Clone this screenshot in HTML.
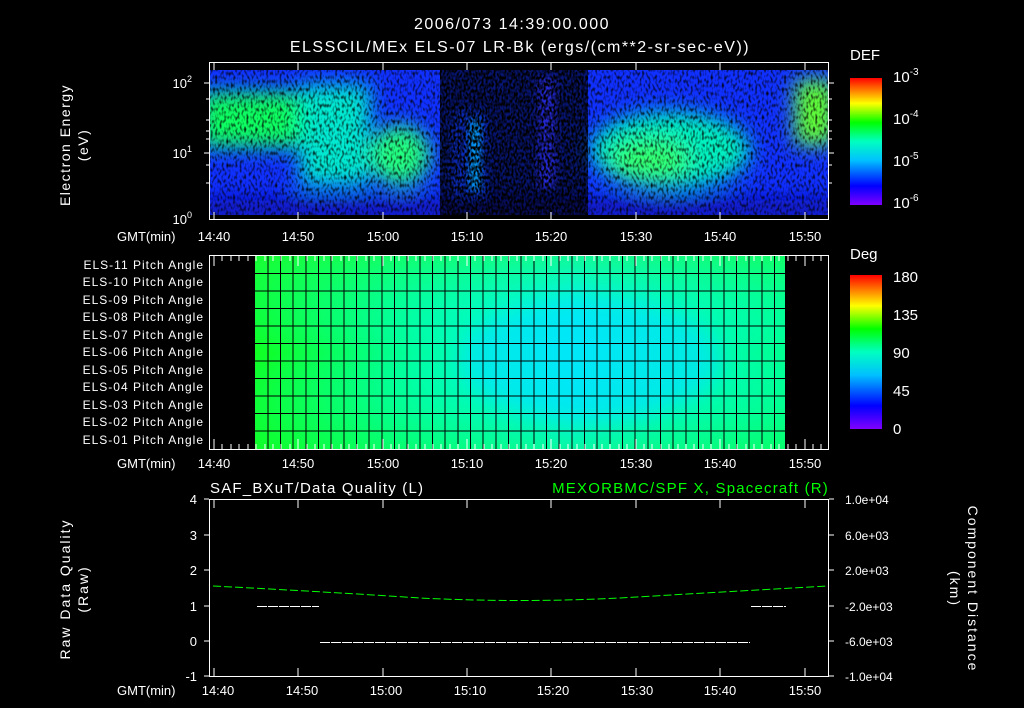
<!DOCTYPE html>
<html><head><meta charset="utf-8"><style>
html,body{margin:0;padding:0;background:#000;}
svg{display:block}
text{font-family:"Liberation Sans",sans-serif;fill:#fff;}
</style></head><body>
<svg width="1024" height="708" viewBox="0 0 1024 708" xmlns="http://www.w3.org/2000/svg">
<defs>
<filter id="b8" x="-50%" y="-50%" width="200%" height="200%"><feGaussianBlur stdDeviation="10"/></filter>
<filter id="b4" x="-50%" y="-50%" width="200%" height="200%"><feGaussianBlur stdDeviation="4"/></filter>
<filter id="noise" x="0" y="0" width="100%" height="100%">
<feTurbulence type="fractalNoise" baseFrequency="0.45 0.25" numOctaves="1" seed="3" result="t"/>
<feColorMatrix in="t" type="matrix" values="0 0 0 0 0  0 0 0 0 0  0 0 0 0 0  0 0 0 -2.5 1.35"/>
</filter>
<filter id="noise2" x="0" y="0" width="100%" height="100%">
<feTurbulence type="fractalNoise" baseFrequency="0.5 0.3" numOctaves="1" seed="7" result="t"/>
<feColorMatrix in="t" type="matrix" values="0 0 0 0 0  0 0 0 0 0  0 0 0 0 0  0 0 0 -4 2.4"/>
</filter>
<clipPath id="c1"><rect x="210" y="70" width="618" height="145"/></clipPath>
<linearGradient id="cb1" x1="0" y1="1" x2="0" y2="0">
<stop offset="0" stop-color="#8000ff"/><stop offset="0.15" stop-color="#0000ff"/><stop offset="0.35" stop-color="#00c0ff"/><stop offset="0.5" stop-color="#00ffc0"/><stop offset="0.65" stop-color="#00ff00"/><stop offset="0.8" stop-color="#ffff00"/><stop offset="0.9" stop-color="#ff8000"/><stop offset="1" stop-color="#ff0000"/>
</linearGradient>
<linearGradient id="mg" x1="0" y1="0" x2="1" y2="0">
<stop offset="0" stop-color="#10ff20"/><stop offset="0.3" stop-color="#00ffa0"/><stop offset="0.6" stop-color="#00f4f0"/><stop offset="1" stop-color="#00ff90"/>
</linearGradient>
<linearGradient id="mgv" x1="0" y1="0" x2="0" y2="1">
<stop offset="0" stop-color="#20ff40" stop-opacity="0.5"/><stop offset="0.5" stop-color="#00ffff" stop-opacity="0"/><stop offset="1" stop-color="#10ff30" stop-opacity="0.4"/>
</linearGradient>
</defs>

<g letter-spacing="1.5">
<text x="512" y="29" font-size="16" text-anchor="middle">2006/073 14:39:00.000</text>
<text x="520" y="52" font-size="16" text-anchor="middle">ELSSCIL/MEx ELS-07 LR-Bk  (ergs/(cm**2-sr-sec-eV))</text>
</g>

<g clip-path="url(#c1)">
<rect x="210" y="70" width="618" height="145" fill="#1030ff"/>
<g filter="url(#b8)">
<rect x="200" y="92" width="100" height="55" fill="#10ff60"/>
<rect x="300" y="85" width="70" height="100" fill="#00e8d0"/>
<ellipse cx="400" cy="155" rx="30" ry="30" fill="#20ff80"/>
<ellipse cx="670" cy="150" rx="80" ry="38" fill="#00f0c0"/>
<ellipse cx="650" cy="160" rx="40" ry="20" fill="#30ff70"/>
<rect x="795" y="80" width="40" height="65" fill="#60ff30"/>
<rect x="200" y="200" width="640" height="20" fill="#1010b0"/>
</g>
<rect x="440" y="70" width="148" height="145" fill="#000" opacity="0.55"/>
<rect x="452" y="110" width="35" height="90" fill="#1040ff" opacity="0.5" filter="url(#b4)"/>
<rect x="470" y="120" width="10" height="70" fill="#00b0ff" filter="url(#b4)"/>
<rect x="538" y="78" width="18" height="110" fill="#3030ff" opacity="0.7" filter="url(#b4)"/>
<rect x="210" y="70" width="618" height="145" fill="#000" filter="url(#noise)"/>
<rect x="440" y="70" width="148" height="145" fill="#000" filter="url(#noise2)"/>
</g>
<rect x="209.5" y="62.5" width="619" height="157" fill="none" stroke="#fff"/>
<g stroke="#fff">
<path d="M214 62v8M298 62v8M383 62v8M467 62v8M551 62v8M636 62v8M720 62v8M805 62v8M214 220v-8M298 220v-8M383 220v-8M467 220v-8M551 220v-8M636 220v-8M720 220v-8M805 220v-8"/>
<path d="M209 83h-5M209 153h-5M829 83h5M829 153h5M209 99h-3M209 120h-3M209 131h-3M209 139h-3M209 165h-3M209 183h-3M829 99h3M829 120h3M829 131h3M829 139h3M829 165h3M829 183h3"/>
</g>
<text x="192" y="88" font-size="13" text-anchor="end">10<tspan font-size="9" dy="-6">2</tspan></text>
<text x="192" y="158" font-size="13" text-anchor="end">10<tspan font-size="9" dy="-6">1</tspan></text>
<text x="192" y="224" font-size="13" text-anchor="end">10<tspan font-size="9" dy="-6">0</tspan></text>
<g letter-spacing="1.5">
<text transform="translate(70,145) rotate(-90)" font-size="14" text-anchor="middle">Electron Energy</text>
<text transform="translate(88,145) rotate(-90)" font-size="14" text-anchor="middle">(eV)</text>
</g>
<g font-size="13">
<text x="117" y="241">GMT(min)</text>
<text x="214" y="241" text-anchor="middle">14:40</text><text x="298" y="241" text-anchor="middle">14:50</text><text x="383" y="241" text-anchor="middle">15:00</text><text x="467" y="241" text-anchor="middle">15:10</text><text x="551" y="241" text-anchor="middle">15:20</text><text x="636" y="241" text-anchor="middle">15:30</text><text x="720" y="241" text-anchor="middle">15:40</text><text x="805" y="241" text-anchor="middle">15:50</text>
</g>
<text x="850" y="60" font-size="15">DEF</text>
<rect x="850" y="78" width="32" height="127" fill="url(#cb1)"/>
<text x="893" y="82" font-size="15">10<tspan font-size="10" dy="-7">-3</tspan></text>
<text x="893" y="124" font-size="15">10<tspan font-size="10" dy="-7">-4</tspan></text>
<text x="893" y="166" font-size="15">10<tspan font-size="10" dy="-7">-5</tspan></text>
<text x="893" y="208" font-size="15">10<tspan font-size="10" dy="-7">-6</tspan></text>

<rect x="255" y="256" width="530" height="193" fill="url(#mg)"/>
<rect x="255" y="256" width="530" height="193" fill="url(#mgv)"/>
<ellipse cx="590" cy="360" rx="130" ry="60" fill="#00e0ff" opacity="0.6" filter="url(#b8)"/>
<g stroke="#000" stroke-width="1">
<path d="M255 273.5h530M255 291h530M255 308.5h530M255 326h530M255 343.5h530M255 361h530M255 378.5h530M255 396h530M255 413.5h530M255 431h530"/>
<path d="M268 256v193M280.5 256v193M293 256v193M306 256v193M318.5 256v193M331 256v193M344 256v193M356.5 256v193M369 256v193M382 256v193M394.5 256v193M407 256v193M420 256v193M432.5 256v193M445 256v193M458 256v193M470.5 256v193M483 256v193M496 256v193M508.5 256v193M521 256v193M534 256v193M546.5 256v193M559 256v193M572 256v193M584.5 256v193M597 256v193M610 256v193M622.5 256v193M635 256v193M648 256v193M660.5 256v193M673 256v193M686 256v193M698.5 256v193M711 256v193M724 256v193M736.5 256v193M749 256v193M762 256v193M774.5 256v193"/>
</g>
<rect x="209.5" y="255.5" width="619" height="194" fill="none" stroke="#fff"/>
<g stroke="#fff">
<path d="M214 256v10M298 256v10M383 256v10M467 256v10M551 256v10M636 256v10M720 256v10M805 256v10M214 449v-10M298 449v-10M383 449v-10M467 449v-10M551 449v-10M636 449v-10M720 449v-10M805 449v-10"/>
<path d="M222 256v5M231 256v5M239 256v5M248 256v5M256 256v5M265 256v5M273 256v5M281 256v5M290 256v5M307 256v5M315 256v5M324 256v5M332 256v5M341 256v5M349 256v5M357 256v5M366 256v5M374 256v5M391 256v5M399 256v5M408 256v5M416 256v5M425 256v5M433 256v5M441 256v5M450 256v5M458 256v5M475 256v5M484 256v5M492 256v5M501 256v5M509 256v5M517 256v5M526 256v5M534 256v5M543 256v5M560 256v5M568 256v5M577 256v5M585 256v5M594 256v5M602 256v5M610 256v5M619 256v5M627 256v5M644 256v5M652 256v5M661 256v5M669 256v5M678 256v5M686 256v5M694 256v5M703 256v5M711 256v5M729 256v5M737 256v5M746 256v5M754 256v5M762 256v5M771 256v5M779 256v5M788 256v5M796 256v5M813 256v5M821 256v5"/>
<path d="M222 449v-5M231 449v-5M239 449v-5M248 449v-5M256 449v-5M265 449v-5M273 449v-5M281 449v-5M290 449v-5M307 449v-5M315 449v-5M324 449v-5M332 449v-5M341 449v-5M349 449v-5M357 449v-5M366 449v-5M374 449v-5M391 449v-5M399 449v-5M408 449v-5M416 449v-5M425 449v-5M433 449v-5M441 449v-5M450 449v-5M458 449v-5M475 449v-5M484 449v-5M492 449v-5M501 449v-5M509 449v-5M517 449v-5M526 449v-5M534 449v-5M543 449v-5M560 449v-5M568 449v-5M577 449v-5M585 449v-5M594 449v-5M602 449v-5M610 449v-5M619 449v-5M627 449v-5M644 449v-5M652 449v-5M661 449v-5M669 449v-5M678 449v-5M686 449v-5M694 449v-5M703 449v-5M711 449v-5M729 449v-5M737 449v-5M746 449v-5M754 449v-5M762 449v-5M771 449v-5M779 449v-5M788 449v-5M796 449v-5M813 449v-5M821 449v-5"/>
</g>
<g font-size="12" text-anchor="end" letter-spacing="1">
<text x="204" y="269">ELS-11 Pitch Angle</text><text x="204" y="286">ELS-10 Pitch Angle</text><text x="204" y="304">ELS-09 Pitch Angle</text><text x="204" y="321">ELS-08 Pitch Angle</text><text x="204" y="339">ELS-07 Pitch Angle</text><text x="204" y="356">ELS-06 Pitch Angle</text><text x="204" y="374">ELS-05 Pitch Angle</text><text x="204" y="391">ELS-04 Pitch Angle</text><text x="204" y="409">ELS-03 Pitch Angle</text><text x="204" y="426">ELS-02 Pitch Angle</text><text x="204" y="444">ELS-01 Pitch Angle</text>
</g>
<g font-size="13">
<text x="117" y="468">GMT(min)</text>
<text x="214" y="468" text-anchor="middle">14:40</text><text x="298" y="468" text-anchor="middle">14:50</text><text x="383" y="468" text-anchor="middle">15:00</text><text x="467" y="468" text-anchor="middle">15:10</text><text x="551" y="468" text-anchor="middle">15:20</text><text x="636" y="468" text-anchor="middle">15:30</text><text x="720" y="468" text-anchor="middle">15:40</text><text x="805" y="468" text-anchor="middle">15:50</text>
</g>
<text x="850" y="259" font-size="15">Deg</text>
<rect x="850" y="275" width="32" height="154" fill="url(#cb1)"/>
<g font-size="15"><text x="893" y="282">180</text><text x="893" y="320">135</text><text x="893" y="358">90</text><text x="893" y="396">45</text><text x="893" y="434">0</text></g>

<g letter-spacing="1.2">
<text x="210" y="493" font-size="15">SAF_BXuT/Data Quality (L)</text>
<text x="829" y="493" font-size="15" text-anchor="end" style="fill:#00ff00">MEXORBMC/SPF X, Spacecraft (R)</text>
</g>
<rect x="209.5" y="499.5" width="619" height="177" fill="none" stroke="#fff"/>
<g stroke="#fff">
<path d="M209 499h-5M209 535h-5M209 570h-5M209 606h-5M209 641h-5M209 676h-5M829 499h5M829 535h5M829 570h5M829 606h5M829 641h5M829 676h5"/>
<path d="M214 500v8M298 500v8M383 500v8M467 500v8M551 500v8M636 500v8M720 500v8M805 500v8M214 676v-8M298 676v-8M383 676v-8M467 676v-8M551 676v-8M636 676v-8M720 676v-8M805 676v-8"/>
</g>
<g font-size="13" text-anchor="end"><text x="197" y="504">4</text><text x="197" y="540">3</text><text x="197" y="575">2</text><text x="197" y="611">1</text><text x="197" y="646">0</text><text x="197" y="681">-1</text></g>
<g font-size="12"><text x="845" y="504">1.0e+04</text><text x="845" y="540">6.0e+03</text><text x="845" y="575">2.0e+03</text><text x="845" y="611">-2.0e+03</text><text x="845" y="646">-6.0e+03</text><text x="845" y="681">-1.0e+04</text></g>
<path d="M213 586 Q330 592 420 598 Q520 603 620 598 Q720 592 828 586" fill="none" stroke="#00ff00" stroke-width="1" stroke-dasharray="8 3"/>
<path d="M257 606.5h62M751 606.5h35M320 642.5h430" stroke="#fff" stroke-width="1" stroke-dasharray="10 1"/>
<g letter-spacing="2">
<text transform="translate(70,589) rotate(-90)" font-size="14" text-anchor="middle">Raw  Data  Quality</text>
<text transform="translate(88,589) rotate(-90)" font-size="14" text-anchor="middle">(Raw)</text>
<text transform="translate(968,589) rotate(90)" font-size="14" text-anchor="middle">Component  Distance</text>
<text transform="translate(950,589) rotate(90)" font-size="14" text-anchor="middle">(km)</text>
</g>
<g font-size="13">
<text x="117" y="695">GMT(min)</text>
<text x="218" y="695" text-anchor="middle">14:40</text><text x="302" y="695" text-anchor="middle">14:50</text><text x="386" y="695" text-anchor="middle">15:00</text><text x="470" y="695" text-anchor="middle">15:10</text><text x="553" y="695" text-anchor="middle">15:20</text><text x="637" y="695" text-anchor="middle">15:30</text><text x="720" y="695" text-anchor="middle">15:40</text><text x="805" y="695" text-anchor="middle">15:50</text>
</g>
</svg>
</body></html>
